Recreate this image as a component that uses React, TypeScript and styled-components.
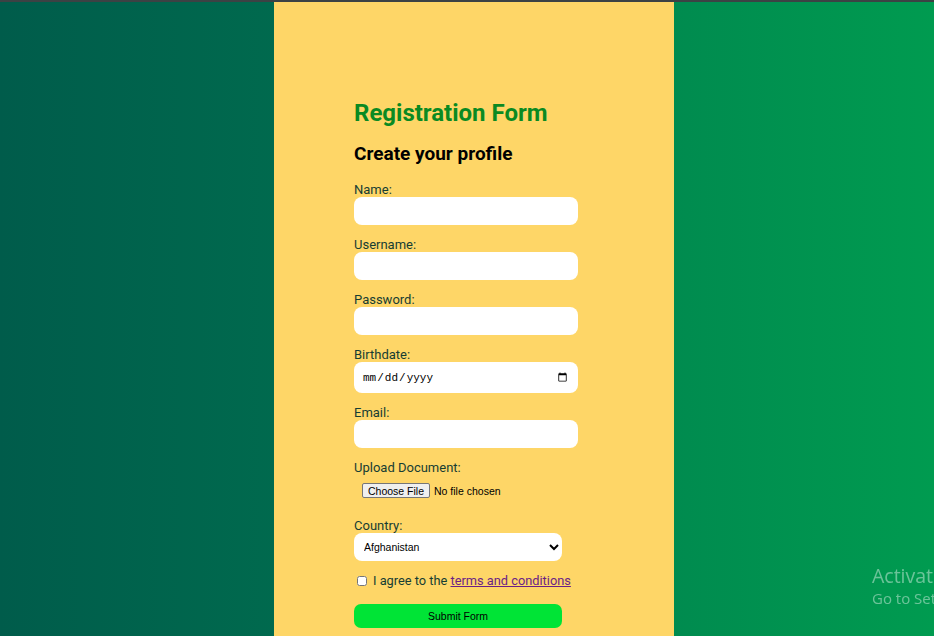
import React from "react";
import styled, { createGlobalStyle } from "styled-components";

const GlobalStyle = createGlobalStyle`
  html, body {
    margin: 0;
    padding: 0;
    height: 636px;
    overflow: hidden;
  }
  body {
    font-family: Roboto, "Liberation Sans", sans-serif;
  }
`;

const Page = styled.div`
  height: 636px;
  box-sizing: border-box;
  border-top: 2px solid #3c4244;
  background: linear-gradient(to right, #005c4b 0%, #006a4e 30%, #008a4f 70%, #009b50 100%);
  display: grid;
  grid-template-columns: 274px 400px 1fr;
`;

const Panel = styled.main`
  grid-column: 2;
  background: #fed667;
  padding: 97px 0 0 80px;
  box-sizing: border-box;
  height: 660px;
`;

const Form = styled.form`
  display: flex;
  flex-direction: column;
  width: 224px;
`;

const Title = styled.h1`
  margin: 0;
  font-size: 24px;
  line-height: 28px;
  font-weight: 700;
  color: #0a8a22;
  white-space: nowrap;
`;

const Subtitle = styled.h2`
  margin: 15px 0 16px;
  font-size: 19px;
  line-height: 24px;
  font-weight: 700;
  color: #000;
  white-space: nowrap;
`;

const Field = styled.div`
  display: flex;
  flex-direction: column;
  margin-bottom: 12px;
`;

const Label = styled.label`
  font-size: 13px;
  line-height: 15px;
  color: #163d33;
`;

const TextInput = styled.input<{ $tall?: boolean }>`
  box-sizing: border-box;
  width: 224px;
  height: ${(p) => (p.$tall ? 31 : 28)}px;
  border: none;
  border-radius: 8px;
  background: #fff;
  padding: 0 8px;
  font-family: "Liberation Mono", monospace;
  font-size: 11px;
  color: #000;
  outline: none;
`;

const FileInput = styled.input`
  box-sizing: border-box;
  width: 224px;
  height: 31px;
  padding: 8px;
  font-family: "Liberation Sans", Arial, sans-serif;
  font-size: 10.5px;
  color: #000;
  &::file-selector-button {
    font-family: "Liberation Sans", Arial, sans-serif;
    font-size: 10.5px;
    height: 15px;
    padding: 0 5px;
    margin-right: 4px;
    border: 1px solid #767676;
    border-radius: 2px;
    background: #efefef;
    color: #000;
  }
`;

const Select = styled.select`
  box-sizing: border-box;
  width: 208px;
  height: 28px;
  border: none;
  border-radius: 8px;
  background: #fff;
  padding: 0 6px;
  font-family: "Liberation Sans", Arial, sans-serif;
  font-size: 10.5px;
  color: #000;
  outline: none;
`;

const CheckRow = styled.div`
  display: flex;
  align-items: center;
  height: 16px;
  margin: 0 0 15px;
  font-size: 12.8px;
  color: #163d33;
  white-space: nowrap;
`;

const Check = styled.input`
  width: 10px;
  height: 10px;
  margin: 0 6px 0 3px;
`;

const CheckText = styled.label`
  line-height: 16px;
`;

const Link = styled.a`
  color: #6b1f86;
  text-decoration: underline;
`;

const Submit = styled.button`
  width: 208px;
  height: 24px;
  border: none;
  border-radius: 7px;
  background: #00e436;
  color: #000;
  font-family: "Liberation Sans", Arial, sans-serif;
  font-size: 10.5px;
  padding: 0;
`;

const Watermark = styled.div`
  position: fixed;
  left: 872px;
  top: 564px;
  white-space: nowrap;
  color: rgba(255, 255, 255, 0.42);
  font-family: "Open Sans", "Noto Sans", sans-serif;
  line-height: 1.2;
`;

const WatermarkTitle = styled.div`
  font-size: 19.5px;
`;

const WatermarkSub = styled.div`
  font-size: 15px;
  margin-top: 2px;
`;

export default function App() {
  return (
    <>
      <GlobalStyle />
      <Page>
        <Panel>
          <Form onSubmit={(e) => e.preventDefault()}>
            <Title>Registration Form</Title>
            <Subtitle>Create your profile</Subtitle>
            <Field>
              <Label htmlFor="name">Name:</Label>
              <TextInput id="name" type="text" />
            </Field>
            <Field>
              <Label htmlFor="username">Username:</Label>
              <TextInput id="username" type="text" />
            </Field>
            <Field>
              <Label htmlFor="password">Password:</Label>
              <TextInput id="password" type="password" />
            </Field>
            <Field>
              <Label htmlFor="birthdate">Birthdate:</Label>
              <TextInput id="birthdate" type="date" $tall />
            </Field>
            <Field>
              <Label htmlFor="email">Email:</Label>
              <TextInput id="email" type="email" />
            </Field>
            <Field>
              <Label htmlFor="doc">Upload Document:</Label>
              <FileInput id="doc" type="file" />
            </Field>
            <Field>
              <Label htmlFor="country">Country:</Label>
              <Select id="country" defaultValue="Afghanistan">
                <option>Afghanistan</option>
                <option>Albania</option>
                <option>Algeria</option>
              </Select>
            </Field>
            <CheckRow>
              <Check type="checkbox" id="terms" />
              <CheckText htmlFor="terms">
                I agree to the <Link href="#">terms and conditions</Link>
              </CheckText>
            </CheckRow>
            <Submit type="submit">Submit Form</Submit>
          </Form>
        </Panel>
      </Page>
      <Watermark>
        <WatermarkTitle>Activate Windows</WatermarkTitle>
        <WatermarkSub>Go to Settings to activate Windows.</WatermarkSub>
      </Watermark>
    </>
  );
}
